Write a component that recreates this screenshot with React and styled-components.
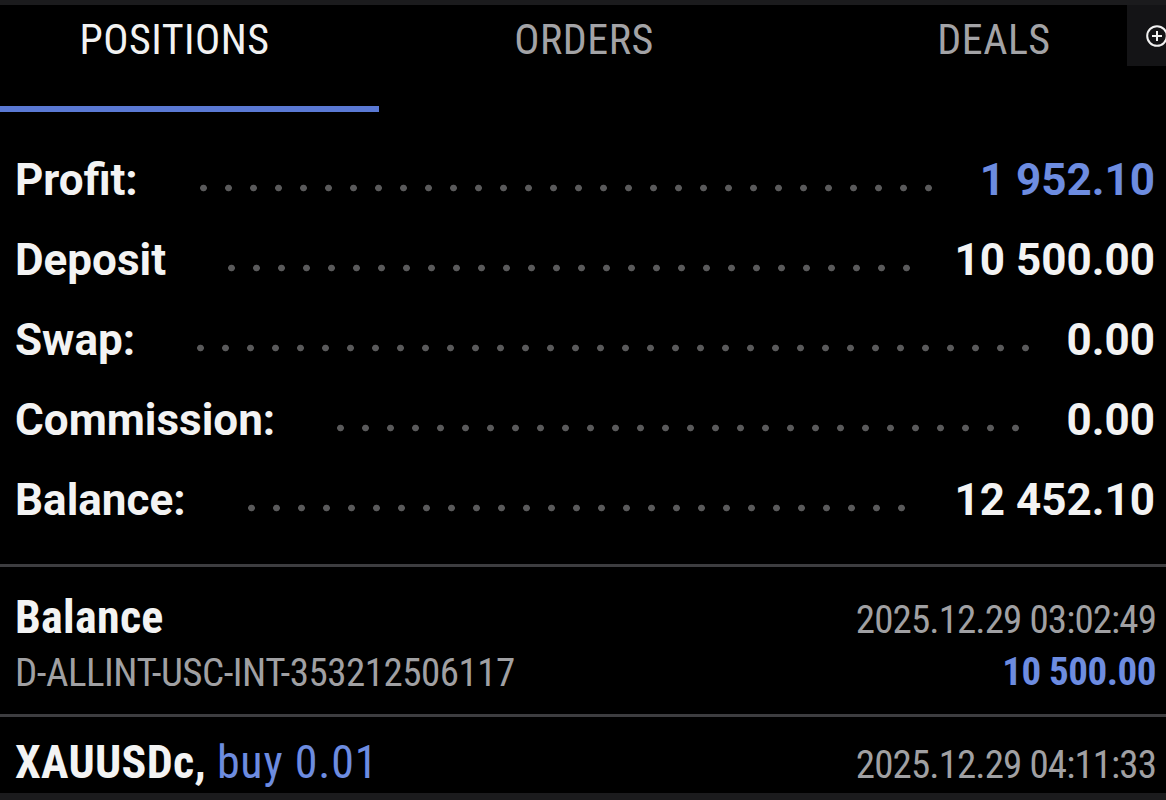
import React from "react";
import styled, { createGlobalStyle } from "styled-components";

const GlobalStyle = createGlobalStyle`
  html, body {
    margin: 0;
    padding: 0;
    background: #000;
    overflow: hidden;
  }
  * {
    box-sizing: border-box;
  }
`;

const Screen = styled.div`
  position: relative;
  width: 1166px;
  height: 800px;
  background: #000;
  display: flex;
  flex-direction: column;
  overflow: hidden;
  font-family: Roboto, "Liberation Sans", sans-serif;
`;

const Strip = styled.div`
  height: ${(p) => p.h}px;
  flex-shrink: 0;
  background: #1b1b1d;
`;

const TabBar = styled.div`
  position: relative;
  height: 107px;
  flex-shrink: 0;
  display: flex;
  overflow: hidden;
  font-stretch: condensed;
`;

const Tab = styled.div`
  position: relative;
  flex: 0 0 ${(p) => p.w}px;
  padding-right: ${(p) => p.pr || 0}px;
  padding-top: 10px;
  text-align: center;
  font-size: 42px;
  letter-spacing: 0.5px;
  color: ${(p) => (p.active ? "#f2f2f2" : "#a3a3a6")};
`;

const Underline = styled.div`
  position: absolute;
  left: 0;
  right: 0;
  bottom: 0;
  height: 6px;
  background: #5a79d4;
`;

const PlusBox = styled.div`
  position: absolute;
  top: 0;
  right: -2px;
  width: 41px;
  height: 61px;
  background: #141416;
  display: flex;
  align-items: center;
  padding-left: 19px;
`;

const Summary = styled.div`
  padding: 28px 11px 24px 15px;
  display: flex;
  flex-direction: column;
`;

const SumRow = styled.div`
  height: 80px;
  display: flex;
  align-items: center;
`;

const Label = styled.span`
  font-size: 44px;
  font-weight: 700;
  color: #f3f3f3;
`;

const Leader = styled.span`
  flex: 1;
  height: 8px;
  margin: 16px ${(p) => p.mr}px 0 53px;
  background-image: radial-gradient(circle, #5a5a5b 3px, transparent 3.7px);
  background-size: 25px 8px;
  background-repeat: repeat-x;
  background-position: left center;
`;

const Amount = styled.span`
  font-size: 44px;
  font-weight: 700;
  color: ${(p) => (p.blue ? "#6d8ce0" : "#f3f3f3")};
`;

const Divider = styled.div`
  height: 3px;
  flex-shrink: 0;
  background: #3d3d40;
`;

const Deal = styled.div`
  height: ${(p) => p.h}px;
  flex-shrink: 0;
  padding: ${(p) => p.pt}px 10px 0 15px;
  display: flex;
  justify-content: space-between;
  align-items: baseline;
  font-stretch: condensed;
  white-space: nowrap;
`;

const Col = styled.div`
  display: flex;
  flex-direction: column;
  gap: ${(p) => (p.right ? 2 : 6)}px;
  align-items: ${(p) => (p.right ? "flex-end" : "flex-start")};
`;

const Title = styled.div`
  font-size: 46px;
  font-weight: 700;
  line-height: 50px;
  letter-spacing: 0.3px;
  color: #f3f3f3;
`;

const Blue = styled.span`
  font-weight: 400;
  letter-spacing: 0.8px;
  color: #6d8ce0;
`;

const Sub = styled.div`
  font-size: 39px;
  line-height: 50px;
  letter-spacing: ${(p) => p.ls}px;
  color: #a0a0a3;
`;

const DealAmount = styled.div`
  font-size: 39px;
  line-height: 50px;
  font-weight: 700;
  letter-spacing: -0.5px;
  color: #6d8ce0;
`;

const summary = [
  { label: "Profit:", value: "1 952.10", blue: true, mr: 40 },
  { label: "Deposit", value: "10 500.00", mr: 36 },
  { label: "Swap:", value: "0.00", mr: 26 },
  { label: "Commission:", value: "0.00", mr: 38 },
  { label: "Balance:", value: "12 452.10", mr: 43 },
];

export default function App() {
  return (
    <Screen>
      <GlobalStyle />
      <Strip h={5} />
      <TabBar>
        <Tab w={379} pr={30} active>
          POSITIONS
          <Underline />
        </Tab>
        <Tab w={410}>ORDERS</Tab>
        <Tab w={410}>DEALS</Tab>
        <PlusBox>
          <svg width="22" height="22" viewBox="0 0 22 22">
            <circle cx="11" cy="11" r="9.8" fill="none" stroke="#f2f2f2" strokeWidth="2" />
            <path d="M11 6v10M6 11h10" stroke="#f2f2f2" strokeWidth="2" />
          </svg>
        </PlusBox>
      </TabBar>
      <Summary>
        {summary.map((r) => (
          <SumRow key={r.label}>
            <Label>{r.label}</Label>
            <Leader mr={r.mr} />
            <Amount blue={r.blue}>{r.value}</Amount>
          </SumRow>
        ))}
      </Summary>
      <Divider />
      <Deal h={147} pt={25}>
        <Col>
          <Title>Balance</Title>
          <Sub ls={-0.5}>D-ALLINT-USC-INT-353212506117</Sub>
        </Col>
        <Col right>
          <Sub ls={-0.9}>2025.12.29 03:02:49</Sub>
          <DealAmount>10 500.00</DealAmount>
        </Col>
      </Deal>
      <Divider />
      <Deal h={76} pt={20}>
        <Col>
          <Title>
            XAUUSDc, <Blue>buy 0.01</Blue>
          </Title>
        </Col>
        <Col right>
          <Sub ls={-0.9}>2025.12.29 04:11:33</Sub>
        </Col>
      </Deal>
      <Strip h={10} />
    </Screen>
  );
}
